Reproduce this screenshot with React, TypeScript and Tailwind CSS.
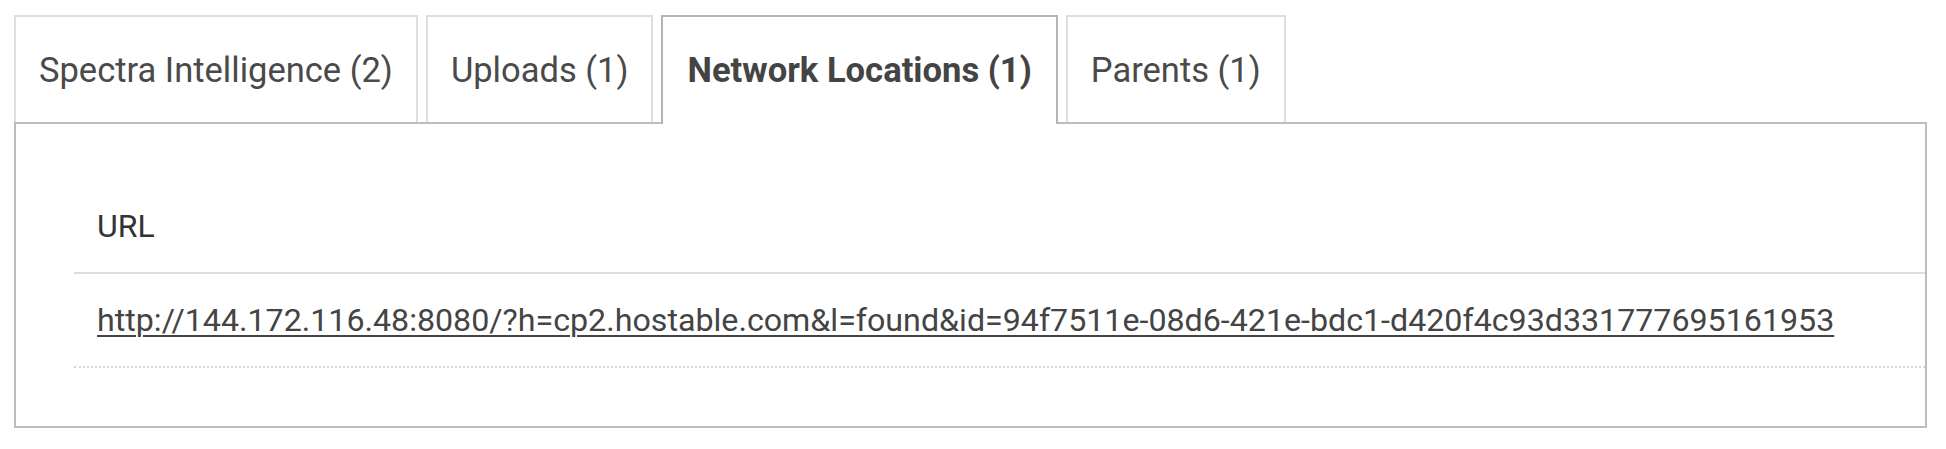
import React from "react";

const tabs = [
  { label: "Spectra Intelligence (2)", active: false },
  { label: "Uploads (1)", active: false },
  { label: "Network Locations (1)", active: true },
  { label: "Parents (1)", active: false },
];

export default function App() {
  return (
    <div
      className="w-[1946px] h-[449px] bg-white pt-[15px] pl-[14px] pr-[19px]"
      style={{ fontFamily: "Roboto, 'Liberation Sans', sans-serif" }}
    >
      <div className="flex items-end gap-[8px]">
        {tabs.map((t) =>
          t.active ? (
            <div
              key={t.label}
              className="relative z-10 -mb-[2px] h-[109px] flex items-center px-[24px] pt-[1px] bg-white border-t-2 border-x-2 border-[#b4b4b4] text-[34.6px] font-bold text-[#444444]"
            >
              {t.label}
            </div>
          ) : (
            <div
              key={t.label}
              className="h-[107px] flex items-center px-[23px] pt-[3px] bg-white border-t-2 border-x-2 border-[#dedede] text-[34.5px] text-[#4a4a4a]"
            >
              {t.label}
            </div>
          )
        )}
      </div>
      <div className="border-2 border-[#bdbdbd] h-[306px] pt-[56px] pl-[58px]">
        <div className="flex flex-col">
          <div className="h-[94px] flex items-center pl-[23px] border-b-2 border-[#dddddd] text-[32px] text-[#333333]">
            URL
          </div>
          <div className="h-[94px] flex items-center pl-[23px] border-b-2 border-dotted border-[#d6d6d6] text-[32.2px] text-[#444444]">
            <a href="#" className="underline decoration-[2px] underline-offset-[4px]">
              http://144.172.116.48:8080/?h=cp2.hostable.com&amp;l=found&amp;id=94f7511e-08d6-421e-bdc1-d420f4c93d331777695161953
            </a>
          </div>
        </div>
      </div>
    </div>
  );
}
